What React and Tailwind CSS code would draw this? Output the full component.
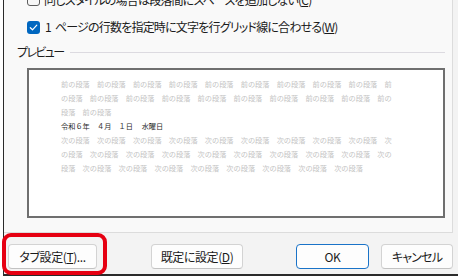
import React from "react";

const UI = { fontFamily: '"Noto Sans CJK JP", "Noto Sans", sans-serif', fontFeatureSettings: '"palt"' };
const PV = { fontFamily: '"Noto Sans CJK JP", sans-serif', fontFeatureSettings: "normal", letterSpacing: 0 };

function Check({ checked }) {
  if (checked) {
    return (
      <div className="w-[13px] h-[13px] rounded-[3px] bg-[#0067c0] flex items-center justify-center shrink-0">
        <svg width="9" height="9" viewBox="0 0 9 9">
          <path d="M1.3 4.7 L3.5 6.8 L7.8 2.2" fill="none" stroke="white" strokeWidth="1.2" strokeLinecap="round" strokeLinejoin="round" />
        </svg>
      </div>
    );
  }
  return <div className="w-[13px] h-[13px] rounded-[3px] border border-[#5d5d5d] bg-[#f7f7f7] shrink-0" />;
}

function Btn({ children, className = "", primary }) {
  return (
    <div
      className={
        "h-[25px] rounded-[4px] flex items-center justify-center text-[12px] text-[#1b1b1b] bg-[#fdfdfd] " +
        (primary ? "border border-[#1a73c8] " : "border border-[#d3d3d3] border-b-[#c2c2c2] ") +
        className
      }
    >
      {children}
    </div>
  );
}

const prev = [
  "前の段落　".repeat(9) + "前",
  "の段落　" + "前の段落　".repeat(8) + "前の",
  "段落　前の段落",
];
const next = [
  "次の段落　".repeat(9) + "次",
  "の段落　" + "次の段落　".repeat(8) + "次の",
  "段落　" + "次の段落　".repeat(7) + "次の段落",
];

export default function App() {
  return (
    <div className="w-[458px] h-[279px] bg-white overflow-hidden relative tracking-[-0.4px]" style={UI}>
      <div className="ml-[3px] h-[276px] border-l border-b-2 border-[#2b2b2b] bg-[#f3f3f3] flex flex-col">
        <div className="w-[449px] h-[233px] border-r border-b border-[#dcdcdc] bg-[#f9f9f9] flex flex-col">
          <div className="-mt-[14px] h-[27px] flex items-center pl-[23px] text-[12px] text-[#1b1b1b] tracking-[-0.8px]">
            <Check />
            <span className="ml-[4px]">同じスタイルの場合は段落間にスペースを追加しない(<span className="underline">C</span>)</span>
          </div>
          <div className="h-[28px] flex items-center pl-[23px] text-[12px] text-[#1b1b1b] tracking-[-0.8px]">
            <Check checked />
            <span className="ml-[5px]"><span className="mr-[4px]">1</span>ページの行数を指定時に文字を行グリッド線に合わせる(<span className="underline">W</span>)</span>
          </div>
          <div className="h-[22px] flex items-center pl-[13px] pr-[7px] text-[12px] text-[#1b1b1b]">
            <span className="tracking-[-1.6px]">プレビュー</span>
            <div className="flex-1 h-px bg-[#dcdae0] ml-[6px]" />
          </div>
          <div className="mt-[5px] ml-[23px] w-[418px] h-[150px] border-2 border-[#6f6f6f] bg-white pl-[32px] pt-[7px] text-[7.2px] leading-[14px]" style={PV}>
            {prev.map((l, i) => (
              <div key={"p" + i} className="whitespace-pre text-[#c3c3c3]">{l}</div>
            ))}
            <div className="whitespace-pre text-[#2a2a2a]">令和６年　４月　１日　 水曜日</div>
            {next.map((l, i) => (
              <div key={"n" + i} className="whitespace-pre text-[#c3c3c3]">{l}</div>
            ))}
          </div>
        </div>
        <div className="mt-[11px] flex pl-[4px]">
          <Btn className="w-[89px]">タブ設定(<span className="underline">T</span>)...</Btn>
          <Btn className="w-[92px] ml-[54px]">既定に設定(<span className="underline">D</span>)</Btn>
          <Btn className="w-[73px] ml-[53px]" primary>OK</Btn>
          <Btn className="w-[72px] ml-[12px]"><span className="tracking-[-0.8px]">キャンセル</span></Btn>
        </div>
      </div>
      <div className="absolute left-[2px] top-[233px] w-[105px] h-[42px] border-4 border-[#e60012] rounded-[9px]" />
    </div>
  );
}
